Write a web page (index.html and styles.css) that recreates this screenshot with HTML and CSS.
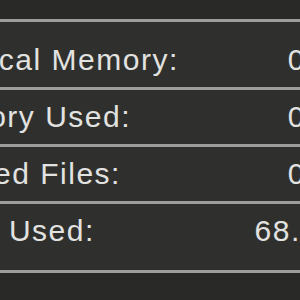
FILE: index.html
```html
<!DOCTYPE html>
<html>
<head>
<meta charset="utf-8">
<link rel="stylesheet" href="styles.css">
</head>
<body>
<div class="view">
  <div class="panel">
    <div class="row"><span class="label">Physical Memory:</span><span class="value">0 bytes</span></div>
    <div class="row"><span class="label">Memory Used:</span><span class="value">0 bytes</span></div>
    <div class="row"><span class="label">Cached Files:</span><span class="value">0 bytes</span></div>
    <div class="row"><span class="label">Swap Used:</span><span class="value">68.50 MB</span></div>
  </div>
</div>
</body>
</html>
```
FILE: styles.css
```css
html, body {
  margin: 0;
  padding: 0;
  width: 300px;
  height: 300px;
  overflow: hidden;
  background: #292a28;
}

.view {
  padding-top: 19px;
  width: 300px;
  overflow: hidden;
}

.panel {
  margin-left: -82px;
  width: 477px;
  background: #2f302d;
  border-top: 3px solid #9d9e9c;
  border-bottom: 3px solid #9d9e9c;
  padding: 11px 0 12px;
  font-family: "Liberation Sans", Arial, sans-serif;
  font-size: 30px;
  letter-spacing: 1.5px;
  color: #e2e2e0;
}

.row {
  display: flex;
  justify-content: space-between;
  align-items: center;
  height: 54px;
  line-height: 54px;
  white-space: nowrap;
}

.row + .row {
  border-top: 3px solid #9d9e9c;
}
```
